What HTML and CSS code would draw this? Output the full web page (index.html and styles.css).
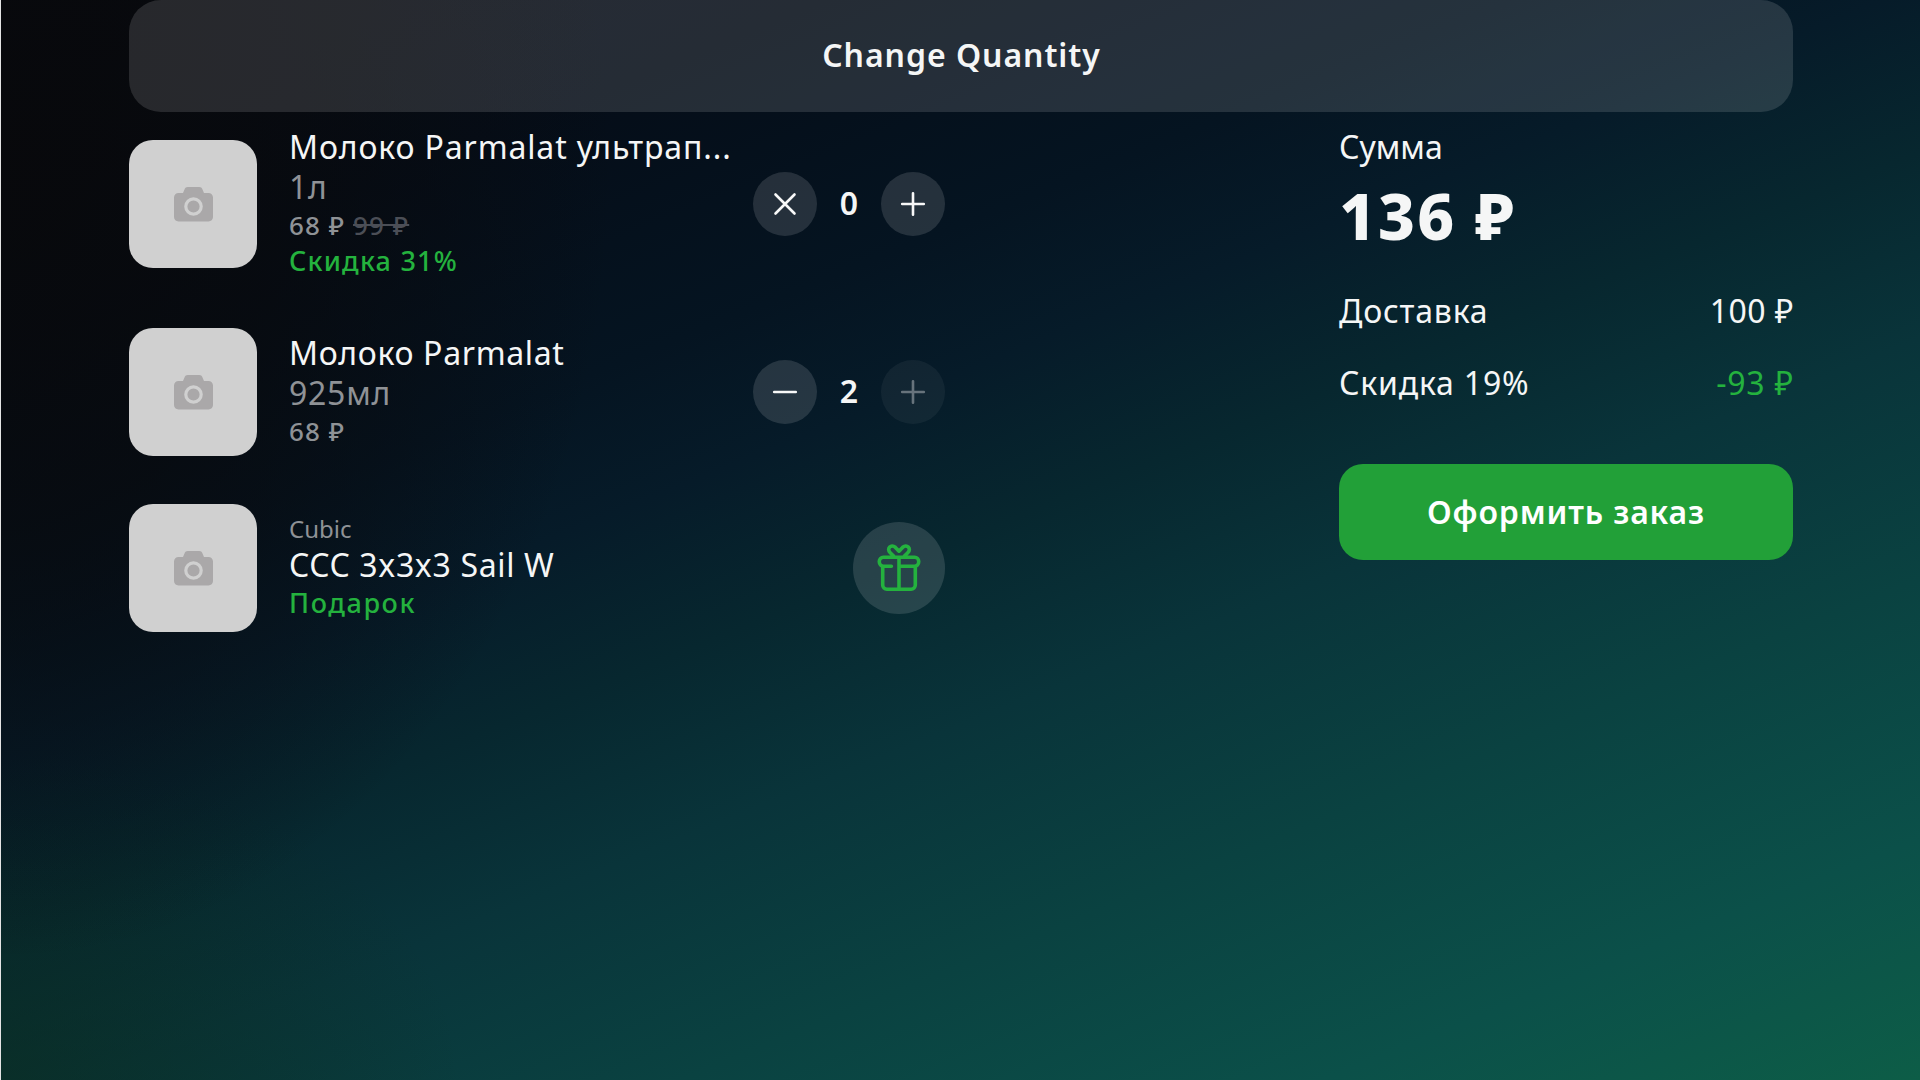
FILE: index.html
```
<!DOCTYPE html>
<html lang="ru">
<head>
<meta charset="utf-8">
<title>Корзина</title>
<link rel="stylesheet" href="styles.css">
</head>
<body>
<svg class="sprite" aria-hidden="true">
  <symbol id="camera" viewBox="0 0 39 35">
    <path fill="#aaa8a9" d="M4.5 6H9l1.6-3.8C11.2.7 12.100 0 13.700 0h11.600c1.600 0 2.500.7 3.100 2.200L30 6h4.500C37 6 39 7.900 39 10.400V30c0 2.500-2 4.400-4.500 4.400h-30C2 34.400 0 32.500 0 30V10.400C0 7.900 2 6 4.500 6z"/>
    <circle cx="19.500" cy="19.500" r="7.700" fill="none" stroke="#d0d0d0" stroke-width="3.200"/>
  </symbol>
  <symbol id="plus" viewBox="0 0 32 32"><path d="M16 5.200v21.600M5.200 16h21.600"/></symbol>
  <symbol id="minus" viewBox="0 0 32 32"><path d="M5.200 16h21.600"/></symbol>
  <symbol id="cross" viewBox="0 0 32 32"><path d="M6.500 6.500l19 19M25.500 6.500l-19 19"/></symbol>
  <symbol id="gift" viewBox="0 0 48 48">
    <path d="M18.800 12.300L15 8.500C11.200 4.600 16.200-.4 20.200 3.200L24 7.200l3.800-4C31.800-.4 36.800 4.600 33 8.500L29.200 12.300M16.400 22.300H8.600a4.300 4.300 0 0 1-4.300-4.400v-.6a4 4 0 0 1 4-4h31.400a4 4 0 0 1 4 4v.6a4.300 4.300 0 0 1-4.300 4.400H24.500M24 13.500v31.500M7.700 22.500v18.600a4.200 4.200 0 0 0 4.200 4.200h24.200a4.200 4.200 0 0 0 4.200-4.200V22.500"/>
  </symbol>
</svg>
<main class="page">
  <button class="change">Change Quantity</button>
  <div class="cart">
    <section class="items">
      <article class="item item-tall">
        <div class="thumb"><svg class="camera"><use href="#camera"/></svg></div>
        <div class="info">
          <div class="title title-long">Молоко Parmalat ультрап...</div>
          <div class="amount">1л</div>
          <div class="price">68 ₽ <s class="old">99 ₽</s></div>
          <div class="note">Скидка 31%</div>
        </div>
        <div class="stepper">
          <button class="round"><svg class="sign"><use href="#cross"/></svg></button>
          <span class="count">0</span>
          <button class="round"><svg class="sign"><use href="#plus"/></svg></button>
        </div>
      </article>
      <article class="item">
        <div class="thumb"><svg class="camera"><use href="#camera"/></svg></div>
        <div class="info">
          <div class="title">Молоко Parmalat</div>
          <div class="amount">925мл</div>
          <div class="price">68 ₽</div>
        </div>
        <div class="stepper">
          <button class="round"><svg class="sign"><use href="#minus"/></svg></button>
          <span class="count">2</span>
          <button class="round disabled"><svg class="sign"><use href="#plus"/></svg></button>
        </div>
      </article>
      <article class="item">
        <div class="thumb"><svg class="camera"><use href="#camera"/></svg></div>
        <div class="info info-gift">
          <div class="brand">Cubic</div>
          <div class="title">CCC 3x3x3 Sail W</div>
          <div class="note gift-note">Подарок</div>
        </div>
        <div class="gift"><svg class="gift-icon"><use href="#gift"/></svg></div>
      </article>
    </section>
    <aside class="summary">
      <div class="label">Сумма</div>
      <div class="total">136 ₽</div>
      <div class="line"><span>Доставка</span><span class="value">100 ₽</span></div>
      <div class="line"><span>Скидка 19%</span><span class="value saved">-93 ₽</span></div>
      <button class="checkout">Оформить заказ</button>
    </aside>
  </div>
</main>
</body>
</html>
```
FILE: styles.css
```
* { box-sizing: border-box; }
html { background: #e4e4e4; }
body {
  margin: 0 0 0 1px;
  height: 1080px;
  overflow: hidden;
  font-family: "Noto Sans", sans-serif;
  font-size: 32px;
  line-height: 40px;
  color: #f5f6f6;
  background:
    radial-gradient(ellipse 32% 74% at 0 15%, rgba(8, 8, 10, 0.85) 0%, rgba(8, 9, 12, 0.7) 45%, rgba(8, 10, 14, 0.35) 75%, rgba(8, 10, 14, 0) 100%),
    radial-gradient(ellipse 24% 30% at 0 100%, rgba(10, 44, 28, 0.55) 0%, rgba(10, 44, 28, 0) 100%),
    linear-gradient(158deg, #070a12 0%, #050d18 18%, #051421 33%, #061b29 41%, #07272f 50%, #09343a 60%, #0a4241 73%, #0b5049 87%, #0d5d47 100%);
}
button {
  margin: 0;
  padding: 0;
  border: 0;
  font: inherit;
  color: inherit;
}
.sprite { display: none; }
.page { width: 1664px; margin-left: 128px; }
.change {
  display: block;
  width: 100%;
  height: 112px;
  padding-left: 1px;
  padding-bottom: 2px;
  border-radius: 32px;
  background: rgba(255, 255, 255, 0.13);
  font-weight: 600;
  letter-spacing: 0.95px;
}
.cart {
  display: flex;
  justify-content: space-between;
  padding-top: 16px;
}
.items {
  display: flex;
  flex-direction: column;
  gap: 48px;
  width: 816px;
}
.item {
  display: flex;
  align-items: center;
  min-height: 128px;
}
.item-tall { height: 152px; }
.thumb {
  display: flex;
  align-items: center;
  justify-content: center;
  width: 128px;
  height: 128px;
  border-radius: 24px;
  background: #d0d0d0;
}
.camera { width: 39px; height: 35px; }
.info {
  flex: 1;
  margin: -2px 0 0 32px;
  white-space: nowrap;
}
.title { letter-spacing: 0.66px; }
.title-long { letter-spacing: 0.86px; }
.amount { letter-spacing: 0.75px; color: #8f9296; }
.price {
  font-size: 26px;
  line-height: 36px;
  font-weight: 500;
  letter-spacing: 1.1px;
  color: #8f9296;
}
.old { color: #4b4e56; }
.note {
  font-size: 27px;
  line-height: 36px;
  font-weight: 500;
  letter-spacing: 1.2px;
  color: #24b23e;
}
.gift-note { letter-spacing: 1.6px; }
.brand { font-size: 24px; line-height: 32px; color: #8f9296; }
.stepper {
  display: flex;
  align-items: center;
}
.round {
  display: flex;
  align-items: center;
  justify-content: center;
  width: 64px;
  height: 64px;
  border-radius: 50%;
  background: rgba(255, 255, 255, 0.13);
}
.disabled { opacity: 0.4; }
.sign {
  width: 32px;
  height: 32px;
  fill: none;
  stroke: #f8f8f8;
  stroke-width: 2.6;
  stroke-linecap: round;
}
.count {
  width: 64px;
  padding-bottom: 2px;
  text-align: center;
  font-weight: 600;
}
.gift {
  display: flex;
  align-items: center;
  justify-content: center;
  width: 92px;
  height: 92px;
  border-radius: 50%;
  background: rgba(255, 255, 255, 0.13);
}
.gift-icon {
  width: 48px;
  height: 48px;
  fill: none;
  stroke: #24b23e;
  stroke-width: 3.6;
  stroke-linecap: round;
  stroke-linejoin: round;
  overflow: visible;
}
.summary { width: 454px; margin-top: -1px; }
.total {
  margin: 13px 0 39px;
  font-size: 64px;
  line-height: 72px;
  font-weight: 800;
  letter-spacing: 2.1px;
}
.line {
  display: flex;
  justify-content: space-between;
  margin-bottom: 32px;
  letter-spacing: 0.8px;
}
.line + .line { margin-bottom: 0; }
.value { margin-right: -1px; letter-spacing: 0.5px; }
.saved { letter-spacing: 0.8px; color: #24b23e; }
.checkout {
  display: block;
  width: 100%;
  height: 96px;
  margin-top: 61px;
  padding-bottom: 1px;
  border-radius: 24px;
  background: #22a038;
  color: #fff;
  font-weight: 600;
  letter-spacing: 0.85px;
}
```
